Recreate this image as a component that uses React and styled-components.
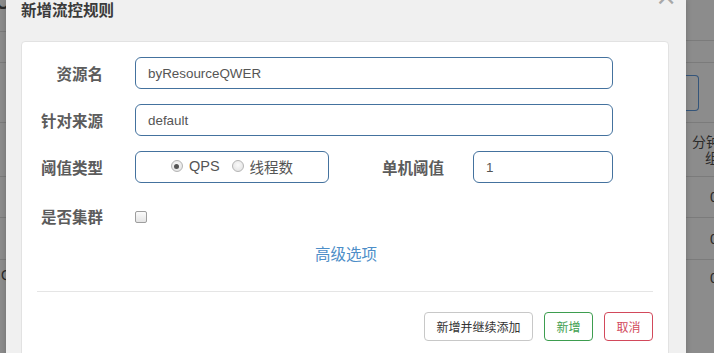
import React from "react";
import styled, { createGlobalStyle } from "styled-components";

const GlobalStyle = createGlobalStyle`
  html, body { margin: 0; padding: 0; }
  body {
    font-family: "Liberation Sans", "Noto Sans CJK SC", sans-serif;
    background: #8c8c8c;
  }
`;

const Page = styled.div`
  width: 714px;
  height: 353px;
  overflow: hidden;
  display: grid;
  grid-template-columns: 6px 680px 28px;
  background: #8c8c8c;
`;

const Strip = styled.div`
  display: flex;
  flex-direction: column;
  overflow: hidden;
  color: #2a2a2a;
  font-size: 14px;
`;

const StripCell = styled.div`
  flex: none;
  height: ${(p) => p.$h}px;
  border-bottom: ${(p) => (p.$line ? "1px solid #7b7b7b" : "none")};
  box-sizing: border-box;
  display: flex;
  flex-direction: column;
  justify-content: ${(p) => p.$justify || "center"};
  align-items: ${(p) => p.$align || "flex-start"};
  line-height: 16px;
  white-space: nowrap;
`;

const GhostButton = styled.div`
  width: 13px;
  height: 36px;
  border: 1px solid #34557a;
  border-left: none;
  border-radius: 0 4px 4px 0;
  box-sizing: border-box;
`;

const Modal = styled.div`
  position: relative;
  background: #f0f0f0;
  padding: 0 17px 0 15px;
  box-shadow: 0 0 6px rgba(0, 0, 0, 0.2);
  font-family: "Liberation Sans", "Noto Sans CJK SC", sans-serif;
`;

const Close = styled.span`
  position: absolute;
  top: -17px;
  right: 9px;
  font-size: 26px;
  line-height: 26px;
  color: #a8a8a8;
  font-family: "DejaVu Sans", sans-serif;
`;

const Title = styled.h3`
  margin: 0;
  padding: 1px 0 0 0;
  height: 41px;
  box-sizing: border-box;
  font-size: 15.5px;
  line-height: 20px;
  font-weight: bold;
  color: #3a3a3a;
`;

const Card = styled.div`
  background: #fff;
  border: 1px solid #e2e2e2;
  border-radius: 4px;
  padding-top: 15px;
  height: 340px;
  box-sizing: border-box;
`;

const Row = styled.div`
  display: flex;
  align-items: center;
  height: 32px;
  margin-top: ${(p) => p.$mt ?? 0}px;
  margin-bottom: ${(p) => p.$mb ?? 15}px;
`;

const Label = styled.label`
  flex: none;
  width: ${(p) => p.$w || 81}px;
  text-align: right;
  padding-top: 3px;
  font-size: 15.5px;
  line-height: 20px;
  font-weight: bold;
  color: #5c5c5c;
  margin-right: ${(p) => p.$gap || 32}px;
`;

const Input = styled.div`
  flex: none;
  width: ${(p) => p.$w}px;
  height: 32px;
  box-sizing: border-box;
  border: 1px solid #44729e;
  border-radius: 6px;
  padding: 0 12px;
  display: flex;
  align-items: center;
  font-size: 13.4px;
  color: #555;
  margin-right: ${(p) => p.$mr || 0}px;
`;

const RadioBox = styled(Input)`
  justify-content: center;
  padding: 0 0 2px 0;
  font-size: 14.5px;
`;

const RadioItem = styled.span`
  display: inline-flex;
  align-items: center;
  gap: 6px;
  margin-right: ${(p) => p.$mr || 0}px;
  color: #555;
`;

const RadioDot = styled.span`
  width: 12px;
  height: 12px;
  border-radius: 50%;
  box-sizing: border-box;
  border: 1px solid #b4b4b4;
  background: radial-gradient(circle at 50% 40%, #fafafa 0%, #dedede 100%);
  display: inline-flex;
  align-items: center;
  justify-content: center;
  &::after {
    content: "";
    width: 5px;
    height: 5px;
    border-radius: 50%;
    background: ${(p) => (p.$on ? "#555" : "transparent")};
  }
`;

const Checkbox = styled.span`
  width: 12px;
  height: 12px;
  margin-top: 2px;
  box-sizing: border-box;
  border: 1px solid #9e9e9e;
  border-radius: 2px;
  background: linear-gradient(#fbfbfb, #e4e4e4);
`;

const LinkRow = styled.div`
  text-align: center;
  margin-top: 13px;
  padding-left: 2px;
`;

const Link = styled.a`
  font-size: 15.5px;
  line-height: 20px;
  color: #4d8ec8;
  text-decoration: none;
`;

const Divider = styled.hr`
  margin: 26px 15px 0 15px;
  border: none;
  border-top: 1px solid #e5e5e5;
  height: 0;
`;

const Footer = styled.div`
  display: flex;
  justify-content: flex-end;
  gap: 11px;
  padding: 20px 15px 0 0;
`;

const tones = {
  default: { b: "#c8c8c8", c: "#333" },
  success: { b: "#3d9d4f", c: "#3f9e4f" },
  danger: { b: "#d2495b", c: "#d2495b" },
};

const Button = styled.button`
  height: 29px;
  width: ${(p) => p.$w}px;
  box-sizing: border-box;
  background: #fff;
  border: 1px solid ${(p) => tones[p.$tone].b};
  color: ${(p) => tones[p.$tone].c};
  border-radius: 4px;
  font-family: "Liberation Sans", "Noto Sans CJK SC", sans-serif;
  font-size: 12px;
  padding: 0;
`;

const EdgeText = styled.span`
  display: block;
  align-self: ${(p) => p.$self || "auto"};
  margin-left: ${(p) => p.$ml || 0}px;
  margin-right: ${(p) => p.$mr || 0}px;
  margin-top: ${(p) => p.$mt || 0}px;
  font-size: ${(p) => p.$fs || 14}px;
  font-weight: ${(p) => (p.$bold ? "bold" : "normal")};
`;

export default function App() {
  return (
    <>
      <GlobalStyle />
      <Page>
        <Strip>
          <StripCell $h={32} $line $justify="flex-start">
            <EdgeText $self="flex-end" $fs={20} $bold $mt={-6} $mr={-4}>C</EdgeText>
          </StripCell>
          <StripCell $h={31} $line />
          <StripCell $h={60} $line />
          <StripCell $h={54} $line />
          <StripCell $h={41} $line />
          <StripCell $h={42} $line />
          <StripCell $h={30}>
            <EdgeText $self="flex-end" $mr={-6}>Q</EdgeText>
          </StripCell>
        </Strip>

        <Modal>
          <Close>×</Close>
          <Title>新增流控规则</Title>
          <Card>
            <Row>
              <Label>资源名</Label>
              <Input $w={478}>byResourceQWER</Input>
            </Row>
            <Row>
              <Label>针对来源</Label>
              <Input $w={478}>default</Input>
            </Row>
            <Row>
              <Label>阈值类型</Label>
              <RadioBox $w={194} $mr={53}>
                <RadioItem $mr={12}>
                  <RadioDot $on />
                  QPS
                </RadioItem>
                <RadioItem>
                  <RadioDot />
                  线程数
                </RadioItem>
              </RadioBox>
              <Label $w={62} $gap={29}>单机阈值</Label>
              <Input $w={140}>1</Input>
            </Row>
            <Row $mb={0} $mt={17}>
              <Label>是否集群</Label>
              <Checkbox />
            </Row>
            <LinkRow>
              <Link href="#">高级选项</Link>
            </LinkRow>
            <Divider />
            <Footer>
              <Button $tone="default" $w={109}>新增并继续添加</Button>
              <Button $tone="success" $w={49}>新增</Button>
              <Button $tone="danger" $w={49}>取消</Button>
            </Footer>
          </Card>
        </Modal>

        <Strip>
          <StripCell $h={41} $line />
          <StripCell $h={22} $line />
          <StripCell $h={60} $line $justify="center">
            <GhostButton />
          </StripCell>
          <StripCell $h={54} $line>
            <EdgeText $ml={6}>分钟</EdgeText>
            <EdgeText $ml={19}>组</EdgeText>
          </StripCell>
          <StripCell $h={41} $line>
            <EdgeText $ml={24}>0</EdgeText>
          </StripCell>
          <StripCell $h={42} $line>
            <EdgeText $ml={24}>0</EdgeText>
          </StripCell>
          <StripCell $h={40} $justify="flex-start">
            <EdgeText $ml={24} $mt={10}>0</EdgeText>
          </StripCell>
        </Strip>
      </Page>
    </>
  );
}
